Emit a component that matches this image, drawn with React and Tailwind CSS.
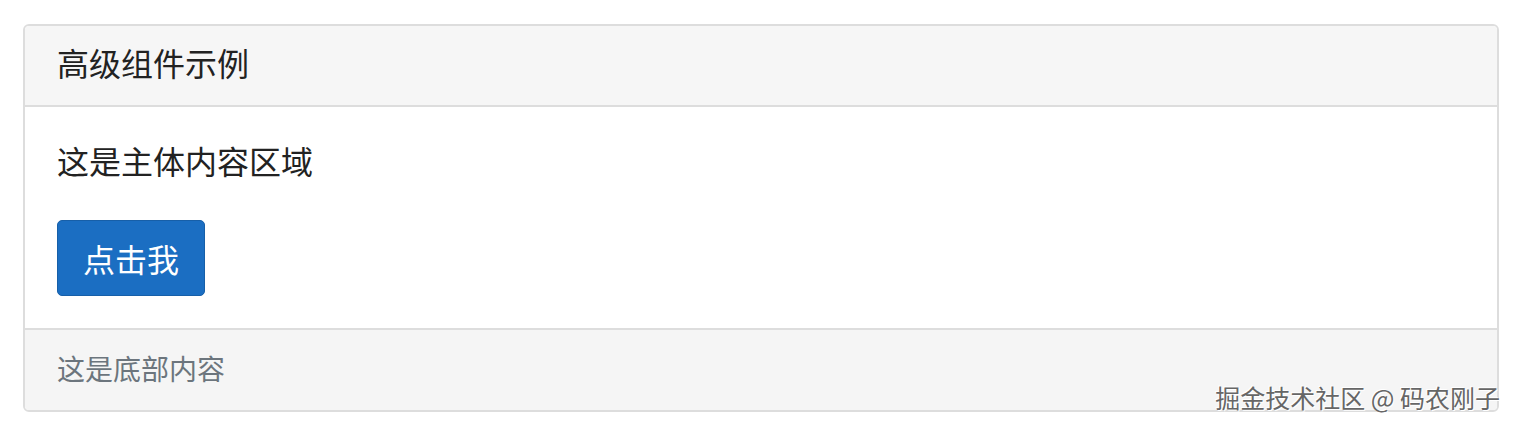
import React from 'react';

const font = { fontFamily: '"Noto Sans CJK SC", "Noto Sans", sans-serif' };

export default function App() {
  return (
    <div className="relative w-[1514px] h-[428px] bg-white" style={font}>
      <div className="pt-[24px] pl-[23px] pr-[15px]">
        <div className="border-2 border-[#dddddd] rounded-[6px] overflow-hidden">
          <div className="h-[81px] bg-[#f6f6f6] border-b-2 border-[#dddddd] flex items-center px-[32px]">
            <h3 className="text-[32px] leading-none text-[#222] -mt-[7px]">高级组件示例</h3>
          </div>
          <div className="h-[221px] bg-white px-[32px] pt-[33px]">
            <p className="text-[32px] leading-[40px] text-[#222]">这是主体内容区域</p>
            <button className="mt-[40px] h-[76px] px-[25px] bg-[#1b6ec2] border border-[#175fa8] rounded-[5px] text-white text-[32px] leading-none">
              点击我
            </button>
          </div>
          <div className="h-[82px] bg-[#f5f5f5] border-t-2 border-[#dddddd] flex items-center px-[32px]">
            <span className="text-[28px] leading-none text-[#6c757d] -mt-[4px]">这是底部内容</span>
          </div>
        </div>
      </div>
      <div className="absolute right-[14px] top-[382px] text-[25px] leading-[30px] text-[#666] [text-shadow:1px_1px_0_#fff,-1px_-1px_0_#fff]">
        掘金技术社区 @ 码农刚子
      </div>
    </div>
  );
}
